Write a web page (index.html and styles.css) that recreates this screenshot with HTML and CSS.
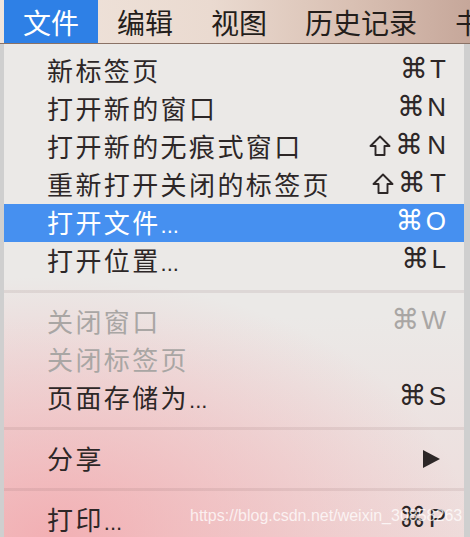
FILE: index.html
```html
<!DOCTYPE html>
<html lang="zh-CN">
<head>
    <meta charset="UTF-8">
    <title>文件菜单</title>
    <link rel="stylesheet" href="styles.css">
</head>
<body>
    <div class="menubar">
        <span class="bar-item on">文件</span>
        <span class="bar-item">编辑</span>
        <span class="bar-item">视图</span>
        <span class="bar-item">历史记录</span>
        <span class="bar-item">书签</span>
    </div>
    <div class="page">
        <div class="menu">
            <div class="item"><span class="label">新标签页</span><span class="key"><span class="cmd">⌘</span>T</span></div>
            <div class="item"><span class="label">打开新的窗口</span><span class="key"><span class="cmd">⌘</span>N</span></div>
            <div class="item"><span class="label">打开新的无痕式窗口</span><span class="key wide"><svg class="shift" width="22" height="22" viewBox="0 0 22 22"><polygon points="11,1.5 20.5,11 15.5,11 15.5,20 6.5,20 6.5,11 1.5,11" fill="none" stroke="currentColor" stroke-width="1.9" stroke-linejoin="round"/></svg><span class="cmd">⌘</span>N</span></div>
            <div class="item"><span class="label">重新打开关闭的标签页</span><span class="key wide"><svg class="shift" width="22" height="22" viewBox="0 0 22 22"><polygon points="11,1.5 20.5,11 15.5,11 15.5,20 6.5,20 6.5,11 1.5,11" fill="none" stroke="currentColor" stroke-width="1.9" stroke-linejoin="round"/></svg><span class="cmd">⌘</span>T</span></div>
            <div class="item on"><span class="label">打开文件<span class="dots">...</span></span><span class="key"><span class="cmd">⌘</span>O</span></div>
            <div class="item"><span class="label">打开位置<span class="dots">...</span></span><span class="key"><span class="cmd">⌘</span>L</span></div>
            <div class="sep"></div>
            <div class="item off"><span class="label">关闭窗口</span><span class="key"><span class="cmd">⌘</span>W</span></div>
            <div class="item off"><span class="label">关闭标签页</span></div>
            <div class="item"><span class="label">页面存储为<span class="dots">...</span></span><span class="key"><span class="cmd">⌘</span>S</span></div>
            <div class="sep"></div>
            <div class="item"><span class="label">分享</span>
                <svg class="arrow" width="18" height="18" viewBox="0 0 18 18"><polygon points="1,0 18,9 1,18" fill="#2d2727"/></svg>
            </div>
            <div class="sep"></div>
            <div class="item"><span class="label">打印<span class="dots">...</span></span><span class="key"><span class="cmd">⌘</span>P</span></div>
            <div class="mark">https://blog.csdn.net/weixin_30858263</div>
        </div>
    </div>
</body>
</html>
```

FILE: styles.css
```css
*{
    margin: 0; padding: 0;
}
body {
    width: 470px; height: 537px; overflow: hidden;
    background: #cfcfcf;
    font-family: "Noto Sans CJK SC", sans-serif;
}
.menubar {
    display: flex; height: 43px; border-bottom: 1px solid #8a7266;
    background: linear-gradient(to right, #f0e5dd 0%, #eadad0 45%, #d9c0b3 75%, #c6a79a 100%);
    padding-left: 4px;
}
.bar-item {
    display: flex; align-items: center; padding: 0 19px; font-size: 28px; color: #241e1b; white-space: nowrap;
}
.bar-item.on {
    background: #2e80e6; color: #fff;
}
.page {
    display: flex; padding-left: 4px;
}
.menu {
    position: relative; width: 460px; height: 493px; padding-top: 8px; box-sizing: border-box;
    background:
        radial-gradient(ellipse 420px 260px at 10% 100%, rgba(243,168,173,.85), rgba(243,168,173,0) 100%),
        linear-gradient(to bottom, #ebe9e7 55%, #eedcdb 100%);
}
.item {
    display: flex; justify-content: space-between; align-items: center; box-sizing: border-box;
    height: 38px; padding: 0 18px 4px 43px; color: #2d2727;
}
.item.on { background: #4690f0; color: #fff; }
.item.off { color: #a9a6a4; }
.label { font-size: 26px; letter-spacing: 2.4px; white-space: nowrap; }
.dots { font-family: "Liberation Sans", sans-serif; font-size: 22px; letter-spacing: 0; }
.key {
    display: flex; align-items: center; gap: 2px;
    font-family: "Liberation Sans", "DejaVu Sans", sans-serif; font-size: 26px;
}
.key.wide { gap: 4px; }
.cmd { font-family: "DejaVu Sans", sans-serif; font-size: 28px; line-height: 1; }
.shift { margin-top: 2px; }
.arrow { margin-right: 6px; margin-top: 4px; }
.sep { height: 3px; margin: 10px 0; background: rgba(120,90,90,.12); }
.mark {
    position: absolute; left: 186px; top: 463px;
    font-family: "Liberation Sans", sans-serif; font-size: 16px; color: rgba(255,255,255,.75);
}
```
